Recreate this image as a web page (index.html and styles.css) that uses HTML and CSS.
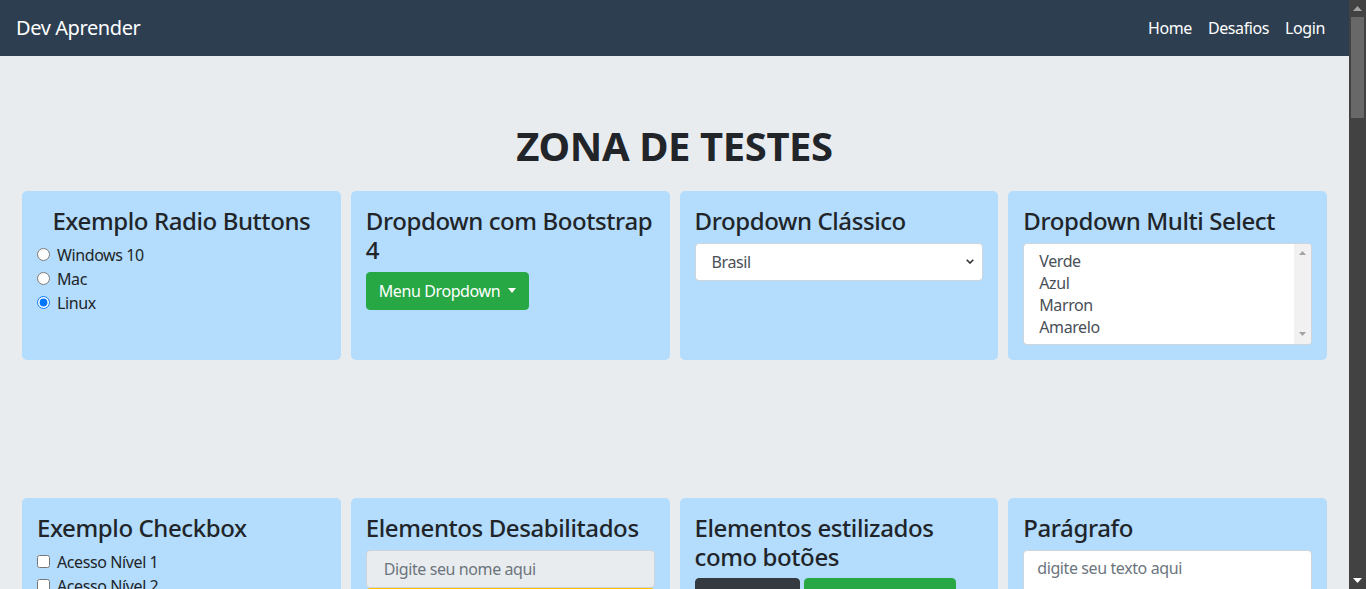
FILE: index.html
```html
<!DOCTYPE html>
<html lang="pt-BR">
<head>
<meta charset="utf-8">
<title>Dev Aprender - Zona de Testes</title>
<link rel="stylesheet" href="styles.css">
</head>
<body>
<div class="viewport">
  <div class="site">
    <nav class="navbar">
      <a class="brand" href="#">Dev Aprender</a>
      <ul class="nav-links">
        <li><a href="#">Home</a></li>
        <li><a href="#">Desafios</a></li>
        <li><a href="#">Login</a></li>
      </ul>
    </nav>
    <main class="page">
      <h1 class="page-title">ZONA DE TESTES</h1>

      <section class="card-row">
        <div class="card">
          <h4 class="card-title center">Exemplo Radio Buttons</h4>
          <div class="choice-list">
            <label class="choice"><input type="radio" name="so">Windows 10</label>
            <label class="choice"><input type="radio" name="so">Mac</label>
            <label class="choice"><input type="radio" name="so" checked>Linux</label>
          </div>
        </div>
        <div class="card">
          <h4 class="card-title">Dropdown com Bootstrap 4</h4>
          <button class="btn btn-success" type="button">Menu Dropdown<span class="caret"></span></button>
        </div>
        <div class="card">
          <h4 class="card-title">Dropdown Clássico</h4>
          <select class="select">
            <option>Brasil</option>
            <option>Argentina</option>
            <option>Portugal</option>
          </select>
        </div>
        <div class="card">
          <h4 class="card-title">Dropdown Multi Select</h4>
          <div class="listbox">
            <select class="multi" multiple>
              <option>Verde</option>
              <option>Azul</option>
              <option>Marron</option>
              <option>Amarelo</option>
              <option>Vermelho</option>
            </select>
            <div class="mini-scroll">
              <svg width="7" height="4" viewBox="0 0 7 4"><polygon points="0,4 7,4 3.5,0" fill="#a3a3a3"/></svg>
              <svg width="7" height="4" viewBox="0 0 7 4"><polygon points="0,0 7,0 3.5,4" fill="#a3a3a3"/></svg>
            </div>
          </div>
        </div>
      </section>

      <section class="card-row row-two">
        <div class="card">
          <h4 class="card-title">Exemplo Checkbox</h4>
          <div class="choice-list">
            <label class="choice"><input type="checkbox">Acesso Nível 1</label>
            <label class="choice"><input type="checkbox">Acesso Nível 2</label>
            <label class="choice"><input type="checkbox">Acesso Nível 3</label>
          </div>
        </div>
        <div class="card">
          <h4 class="card-title">Elementos Desabilitados</h4>
          <input class="field" type="text" placeholder="Digite seu nome aqui" disabled>
          <button class="btn btn-warning btn-block" type="button" disabled>Botão desabilitado</button>
        </div>
        <div class="card">
          <h4 class="card-title">Elementos estilizados como botões</h4>
          <div class="btn-line">
            <a class="btn btn-dark btn-link-a" href="#">Link</a>
            <button class="btn btn-success btn-input-a" type="button">Input Button</button>
          </div>
        </div>
        <div class="card">
          <h4 class="card-title">Parágrafo</h4>
          <textarea class="field area" placeholder="digite seu texto aqui"></textarea>
        </div>
      </section>
    </main>
  </div>

  <div class="scrollbar" aria-hidden="true">
    <div class="sb-arrow">
      <svg width="9" height="5" viewBox="0 0 9 5"><polygon points="0,5 9,5 4.5,0" fill="#a3a3a3"/></svg>
    </div>
    <div class="sb-track">
      <div class="sb-thumb"></div>
    </div>
    <div class="sb-arrow">
      <svg width="9" height="5" viewBox="0 0 9 5"><polygon points="0,0 9,0 4.5,5" fill="#ffffff"/></svg>
    </div>
  </div>
</div>
</body>
</html>
```

FILE: styles.css
```css
html {
  background: #e9ecef;
}
body {
  margin: 0;
  font-family: "Noto Sans", "Open Sans", sans-serif;
  font-size: 16px;
  line-height: 1.5;
  letter-spacing: -0.025em;
  color: #212529;
  background: #e9ecef;
}

.viewport {
  display: flex;
  align-items: flex-start;
}
.site {
  flex: 1;
  min-width: 0;
}

/* window scrollbar (dark theme) */
.scrollbar {
  position: sticky;
  top: 0;
  flex: 0 0 17px;
  height: 100vh;
  display: flex;
  flex-direction: column;
  background: #424242;
}
.sb-arrow {
  height: 17px;
  display: flex;
  align-items: center;
  justify-content: center;
}
.sb-track {
  flex: 1;
  padding: 0 2px;
}
.sb-thumb {
  height: 101px;
  background: #686868;
}

.navbar {
  display: flex;
  align-items: center;
  justify-content: space-between;
  height: 56px;
  box-sizing: border-box;
  padding: 8px 16px;
  background: #2d3e50;
}
.brand {
  color: #fff;
  font-size: 20px;
  line-height: 30px;
  text-decoration: none;
}
.nav-links {
  display: flex;
  list-style: none;
  margin: 0;
  padding: 0;
}
.nav-links a {
  display: block;
  padding: 8px;
  color: #fff;
  text-decoration: none;
}

.page {
  padding: 66px 22px 200px;
}
.page-title {
  margin: 0 0 21px;
  text-align: center;
  font-size: 40px;
  line-height: 48px;
  font-weight: 700;
}

.card-row {
  display: grid;
  grid-template-columns: repeat(4, 1fr);
  gap: 10px;
}
.row-two {
  margin-top: 138px;
}
.card {
  background: #b3dcfd;
  border-radius: 5px;
  padding: 15px;
  min-width: 0;
}
.card-title {
  margin: 0 0 7px;
  padding-top: 1px;
  font-size: 24px;
  line-height: 1.2;
  font-weight: 500;
}
.center {
  text-align: center;
}

.choice-list {
  display: flex;
  flex-direction: column;
}
.choice {
  display: flex;
  align-items: center;
  line-height: 24px;
}
.choice input {
  margin: 0 7px 0 0;
  width: 13px;
  height: 13px;
}

.btn {
  display: inline-flex;
  align-items: center;
  justify-content: center;
  box-sizing: border-box;
  height: 38px;
  padding: 6px 12px;
  border: 1px solid transparent;
  border-radius: 4px;
  font-family: inherit;
  font-size: 16px;
  line-height: 24px;
  letter-spacing: inherit;
  color: #fff;
  text-decoration: none;
  cursor: pointer;
}
.btn-success {
  background: #28a745;
  border-color: #28a745;
}
.btn-dark {
  background: #343a40;
  border-color: #343a40;
}
.btn-warning {
  background: #ffc107;
  border-color: #ffc107;
  color: #212529;
}
.btn-block {
  display: flex;
  width: 100%;
}
.caret {
  display: inline-block;
  margin-left: 8px;
  border-top: 5px solid #fff;
  border-left: 4px solid transparent;
  border-right: 4px solid transparent;
}
.btn-line {
  display: flex;
  gap: 4px;
}
.btn-link-a {
  width: 105px;
}
.btn-input-a {
  width: 152px;
}

.select {
  display: block;
  width: 100%;
  height: 38px;
  box-sizing: border-box;
  padding: 6px 28px 6px 16px;
  border: 1px solid #ced4da;
  border-radius: 4px;
  font-family: inherit;
  font-size: 16px;
  letter-spacing: inherit;
  color: #495057;
  -webkit-appearance: none;
  appearance: none;
  background: #fff url("data:image/svg+xml;utf8,<svg xmlns='http://www.w3.org/2000/svg' width='8' height='5'><polyline points='0.7,0.7 4,4 7.3,0.7' fill='none' stroke='%23333' stroke-width='1.6'/></svg>") no-repeat right 8px center;
}

.listbox {
  display: flex;
  height: 102px;
  box-sizing: border-box;
  border: 1px solid #ced4da;
  border-radius: 4px;
  background: #fff;
  overflow: hidden;
}
.multi {
  flex: 1;
  min-width: 0;
  height: 88px;
  margin: 6px 0 6px 12px;
  padding: 0;
  border: 0;
  outline: none;
  font-family: inherit;
  font-size: 16px;
  letter-spacing: inherit;
  color: #495057;
  background: #fff;
  overflow: hidden;
}
.multi option {
  padding: 0 3px 0 3px;
  line-height: 22px;
  min-height: 22px;
}
.mini-scroll {
  flex: 0 0 17px;
  display: flex;
  flex-direction: column;
  justify-content: space-between;
  align-items: center;
  padding: 7px 0 8px;
  box-sizing: border-box;
  background: #f1f1f1;
}

.field {
  display: block;
  width: 100%;
  height: 38px;
  box-sizing: border-box;
  padding: 6px 12px 6px 17px;
  border: 1px solid #ced4da;
  border-radius: 4px;
  font-family: inherit;
  font-size: 16px;
  letter-spacing: inherit;
  color: #495057;
  background: #fff;
}
.field::placeholder {
  color: #6c757d;
}
.field:disabled {
  background: #e9ecef;
}
.area {
  height: 86px;
  padding-left: 13px;
  resize: vertical;
}
```
